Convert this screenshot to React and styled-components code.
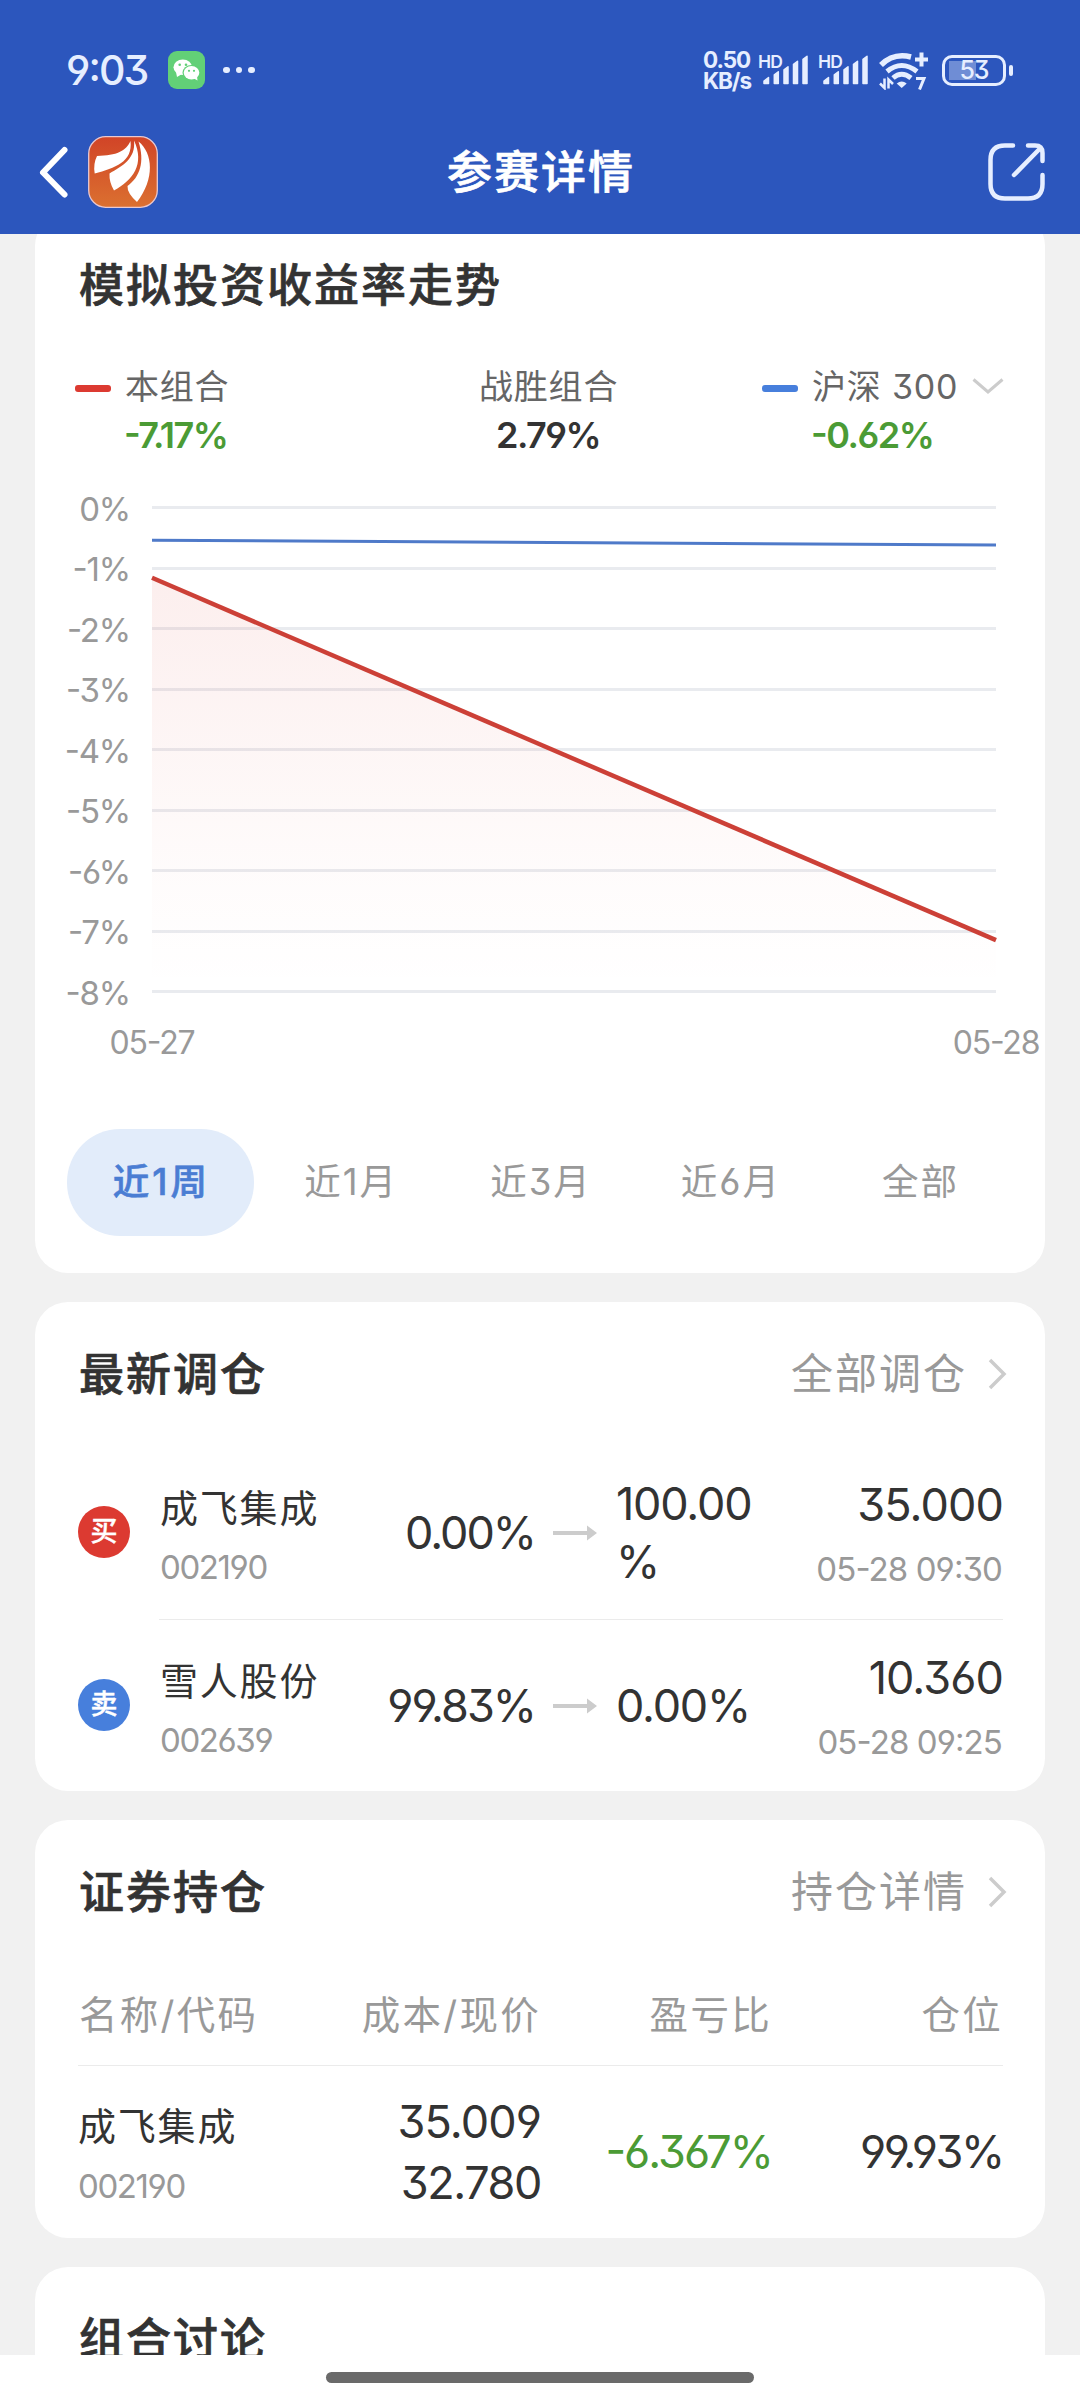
import React, { useState } from 'react';
import styled, { createGlobalStyle } from 'styled-components';

const GlobalStyle = createGlobalStyle`
  * {
    box-sizing: border-box;
  }

  body {
    margin: 0;
    background: #f1f1f1;
    font-family: Inter, 'Noto Sans CJK SC', sans-serif;
    font-feature-settings: 'case', 'cv03', 'cv04', 'cv09';
    color: #333;
  }
`;

const Page = styled.div`
  display: flex;
  flex-direction: column;
  width: 1080px;
  height: 2400px;
  overflow: hidden;
`;

const Header = styled.header`
  height: 234px;
  flex-shrink: 0;
  background: #2c56bd;
  color: #fff;
`;

const StatusBar = styled.div`
  display: flex;
  align-items: center;
  height: 134px;
  padding: 6px 67px 0 66px;
  color: #e6eeff;
`;

const Clock = styled.span`
  width: 102px;
  font-size: 41px;
  font-weight: 500;
  line-height: 44px;
  letter-spacing: -1.9px;
`;

const Dots = styled.div`
  display: flex;
  gap: 6px;
  margin-left: 18px;
  flex: 1;

  i {
    width: 6.5px;
    height: 6.5px;
    border-radius: 50%;
    background: #e6eeff;
  }
`;

const NetSpeed = styled.div`
  width: 56px;
  font-size: 22.5px;
  font-weight: 700;
  line-height: 21px;
  letter-spacing: -1.1px;
  white-space: nowrap;
`;

const Signal = styled.div`
  display: flex;
  width: 50px;
  height: 30px;
  margin-right: 10px;
`;

const SignalTag = styled.span`
  width: 0;
  margin: -2px 0 0 -1px;
  font-size: 17.5px;
  font-weight: 600;
  line-height: 17px;
  letter-spacing: -0.9px;
`;

const Battery = styled.div`
  position: relative;
  display: flex;
  align-items: center;
  justify-content: center;
  width: 64px;
  height: 31px;
  margin: 0 7px 0 13px;
  border: 3px solid #e6eeff;
  border-radius: 10px;
  background: linear-gradient(#6f8dd5, #6f8dd5) 4px 3px / 27px 19px no-repeat;
  font-size: 25px;
  font-weight: 500;
  line-height: 25px;
  letter-spacing: -1px;

  &::after {
    content: '';
    position: absolute;
    right: -10px;
    top: 7px;
    width: 4px;
    height: 11px;
    border-radius: 2px;
    background: #e6eeff;
  }
`;

const NavBar = styled.div`
  display: grid;
  grid-template-columns: 1fr auto 1fr;
  align-items: center;
  height: 75px;
  padding: 0 34px 0 38px;
`;

const NavLeft = styled.div`
  display: flex;
  align-items: center;
  gap: 18px;
`;

const NavTitle = styled.h1`
  margin: 0;
  padding: 3px 2px 0 0;
  font-size: 45px;
  font-weight: 500;
  line-height: 60px;
  letter-spacing: 2px;
  -webkit-text-stroke: 0.7px currentColor;
`;

const NavRight = styled.div`
  display: flex;
  justify-content: flex-end;
`;

const Content = styled.main`
  flex: 1;
  min-height: 0;
  overflow: hidden;
`;

// scrolled slightly, the first card slides under the header
const Feed = styled.div`
  display: flex;
  flex-direction: column;
  gap: 29px;
  margin-top: -21px;
  padding: 0 35px;
`;

const Card = styled.section`
  background: #fff;
  border-radius: 33px;
  height: ${(p) => p.$height}px;
  flex-shrink: 0;
`;

const CardHead = styled.div`
  display: flex;
  align-items: center;
  justify-content: space-between;
  height: 144px;
  padding: 0 38px 0 44px;
`;

const CardTitle = styled.h2`
  margin: 0;
  padding-top: 2px;
  font-size: 45px;
  font-weight: 500;
  line-height: 60px;
  letter-spacing: 2px;
  -webkit-text-stroke: 0.7px currentColor;
`;

const MoreLink = styled.a`
  display: flex;
  align-items: center;
  gap: 21px;
  color: #999;
  font-size: 42px;
  line-height: 60px;
  letter-spacing: 2px;
`;

const Legend = styled.div`
  display: flex;
  padding-left: 40px;
`;

const LegendItem = styled.div`
  display: flex;
  width: ${(p) => p.$width}px;
`;

const LegendMark = styled.i`
  width: 36px;
  height: 7px;
  margin: 28px 14px 0 0;
  border-radius: 3px;
  background: ${(p) => p.$color};
`;

const LegendText = styled.div`
  display: flex;
  flex-direction: column;
  align-items: ${(p) => (p.$center ? 'center' : 'flex-start')};
`;

const LegendLabel = styled.span`
  display: flex;
  align-items: center;
  gap: 14px;
  height: 58px;
  padding-top: 1px;
  color: #666;
  font-size: 34px;
  line-height: 58px;
  letter-spacing: 0.8px;
  white-space: nowrap;
`;

const LegendValue = styled.span`
  color: ${(p) => p.$color || '#333'};
  margin-left: -1px;
  font-size: 36px;
  font-weight: 600;
  line-height: 40px;
  letter-spacing: -1.5px;
`;

const ChartSvg = styled.svg`
  display: block;
  width: 1010px;
  height: 674px;

  text {
    fill: #999;
    letter-spacing: -1.2px;
  }
`;

const Tabs = styled.div`
  display: flex;
  gap: 3px;
  padding: 0 32px;
`;

const Tab = styled.button`
  width: 187px;
  height: 107px;
  padding: 0 0 0 2px;
  border: none;
  border-radius: 53px;
  background: ${(p) => (p.$active ? '#e2ecfa' : 'transparent')};
  color: ${(p) => (p.$active ? '#4a7dd3' : '#999')};
  font-family: inherit;
  font-feature-settings: inherit;
  font-size: 36.5px;
  font-weight: ${(p) => (p.$active ? 500 : 400)};
  line-height: 107px;
  letter-spacing: ${(p) => (p.$active ? 3 : 2)}px;
  -webkit-text-stroke: ${(p) => (p.$active ? 0.6 : 0)}px currentColor;
  cursor: pointer;
`;

const TradeRow = styled.div`
  display: grid;
  grid-template-columns: 82px 200px 174px 82px 150px 1fr;
  align-items: center;
  height: ${(p) => p.$height}px;
  padding: 0 43px;
`;

const Badge = styled.span`
  width: 52px;
  height: 52px;
  margin-top: -2px;
  border-radius: 50%;
  background: ${(p) => (p.$side === '买' ? '#dc3a31' : '#477fdc')};
  color: #fff;
  font-size: 27px;
  font-weight: 500;
  line-height: 52px;
  text-align: center;
  -webkit-text-stroke: 0.4px currentColor;
`;

const Stack = styled.div`
  display: flex;
  flex-direction: column;
  align-items: ${(p) => (p.$right ? 'flex-end' : 'flex-start')};
  padding-top: ${(p) => p.$offset || 0}px;
`;

const StockName = styled.span`
  font-size: 38px;
  line-height: 60px;
  letter-spacing: 1.8px;
`;

const SmallText = styled.span`
  color: #999;
  font-size: 33px;
  line-height: ${(p) => p.$line || 58}px;
  letter-spacing: ${(p) => p.$spacing || -1.4}px;
  white-space: nowrap;
`;

const Figure = styled.span`
  color: ${(p) => p.$color || '#333'};
  margin-right: -1px;
  font-size: 45px;
  line-height: ${(p) => p.$line || 58}px;
  letter-spacing: ${(p) => p.$spacing || -2}px;
  text-align: ${(p) => p.$align || 'right'};
  line-break: anywhere;
`;

const ArrowCell = styled.div`
  display: flex;
  justify-content: center;
`;

const Divider = styled.div`
  height: 1px;
  margin: 0 42px 0 ${(p) => p.$left || 43}px;
  background: #ebebeb;
`;

const HoldingRow = styled.div`
  display: grid;
  grid-template-columns: 230px 232px 231px 1fr;
  align-items: center;
  height: ${(p) => p.$height}px;
  padding: 0 43px;
`;

const ColumnName = styled.span`
  padding-left: 1px;
  margin-right: -1px;
  color: #999;
  font-size: 38.5px;
  line-height: 60px;
  letter-spacing: 2.3px;
  text-align: ${(p) => (p.$right ? 'right' : 'left')};
`;

const Footer = styled.footer`
  display: flex;
  justify-content: center;
  height: 45px;
  padding-top: 17px;
  flex-shrink: 0;
  background: #fff;
`;

const HomeIndicator = styled.div`
  width: 428px;
  height: 11px;
  border-radius: 6px;
  background: #6a6a6a;
`;

const GREEN = '#4b9b35';

const WeChatIcon = () => (
  <svg width="37" height="38" viewBox="0 0 37 38">
    <rect width="37" height="38" rx="9" fill="#62d077" />
    <path d="M8 21l1 5 5-3z" fill="#fff" />
    <ellipse cx="14.8" cy="16.2" rx="9.3" ry="7.8" fill="#fff" />
    <ellipse cx="23.5" cy="21.8" rx="9" ry="7.8" fill="#62d077" />
    <ellipse cx="23.5" cy="21.8" rx="7.8" ry="6.7" fill="#fff" />
    <path d="M25 27l4.5 2.5-.5-4z" fill="#fff" />
    <g fill="#62d077">
      <circle cx="11.7" cy="13.8" r="1.3" />
      <circle cx="18" cy="13.8" r="1.3" />
      <circle cx="21" cy="19.8" r="1.1" />
      <circle cx="26" cy="19.8" r="1.1" />
    </g>
  </svg>
);

const SignalBars = () => (
  <Signal>
    <SignalTag>HD</SignalTag>
    <svg width="50" height="30" viewBox="0 0 50 30" fill="#e6eeff" stroke="#e6eeff" strokeWidth="1.5" strokeLinejoin="round">
      <path d="M6 28.5v-2.5l4.500-3.500v6z" />
      <path d="M16.3 28.5v-8.700l4-3v11.700z" />
      <path d="M26 28.5v-13.700l4-3v16.700z" />
      <path d="M35.5 28.5v-19.200l4-3v22.200z" />
      <path d="M45 28.5v-24.200l4-3v27.200z" />
    </svg>
  </Signal>
);

const WifiIcon = () => (
  <svg width="50" height="40" viewBox="0 0 50 40" fill="none" stroke="#e6eeff">
    <path d="M2 15Q14.5 2.5 32 7" strokeWidth="5.5" />
    <path d="M8 21.5Q22.5 9.5 38 21.5" strokeWidth="5" />
    <path d="M14 28Q22.5 20.5 32 28" strokeWidth="5" />
    <path d="M22.7 38l-5-4.500q5-4 10 0z" fill="#e6eeff" stroke="none" />
    <path d="M42.5 2.5v14M36 9.5h13" strokeWidth="4" />
    <path d="M37 28.5h8l-4.500 11" strokeWidth="3" />
    <path d="M5.5 28.5v9.500l-4.500-4.500M9.500 38.5v-9l4.500 4.500" strokeWidth="2.5" />
  </svg>
);

const BackIcon = () => (
  <svg width="32" height="54" viewBox="0 0 32 54" fill="none" stroke="#fff" strokeWidth="6" strokeLinecap="round" strokeLinejoin="round">
    <path d="M26.5 5L5 27.5L26.5 49.5" />
  </svg>
);

const AppLogo = () => (
  <svg width="70" height="72" viewBox="0 0 70 72">
    <defs>
      <linearGradient id="logoBg" x1="0" y1="0" x2="0" y2="1">
        <stop offset="0" stopColor="#d14427" />
        <stop offset="1" stopColor="#db7030" />
      </linearGradient>
    </defs>
    <rect x="0.7" y="0.7" width="68.6" height="70.6" rx="17" fill="url(#logoBg)" stroke="#e9c8cf" strokeWidth="1.3" />
    <g fill="#fff">
      <path d="M42.5 5C38 15 29 19.5 9 20Q5 28 6.7 37.5C27 32 45 26 42.5 5Z" />
      <path d="M46 4.5C48 23 34 30 21.5 37.5Q21 46 26 54.5C45 44 57 28 46 4.5Z" />
      <path d="M50.5 5.5C65 17 67 43 49 66Q39 57 39.5 50C52 41 57 26 50.5 5.5Z" />
    </g>
  </svg>
);

const ShareIcon = () => (
  <svg width="58" height="60" viewBox="0 0 58 60" fill="none" stroke="#e6eeff" strokeWidth="4.5" strokeLinecap="round">
    <path d="M25 3.5H17Q2.5 3.5 2.5 18V42Q2.5 56.5 17 56.5H40Q54.5 56.5 54.5 42V33" />
    <path d="M40 3.5H47Q54.5 3.5 54.5 11V19" />
    <path d="M52 6.5L26 33" />
  </svg>
);

const ChevronRight = () => (
  <svg width="19" height="32" viewBox="0 0 19 32" fill="none" stroke="#ccc" strokeWidth="3.5">
    <path d="M2 2L16 16L2 30" />
  </svg>
);

const ChevronDown = () => (
  <svg width="32" height="18" viewBox="0 0 32 18" fill="none" stroke="#ccc" strokeWidth="3">
    <path d="M1.5 1.5L16 14L30.5 1.5" />
  </svg>
);

const ArrowIcon = () => (
  <svg width="44" height="16" viewBox="0 0 44 16" fill="#ccc">
    <rect y="6" width="36" height="4" />
    <path d="M34 0.5L44 8L34 15.5Z" />
  </svg>
);

const PLOT = { left: 117, right: 961, top: 52, step: 60.5 };
const levels = [0, 1, 2, 3, 4, 5, 6, 7, 8];
const yAt = (value) => PLOT.top - value * PLOT.step;

const series = {
  portfolio: [-1.17, -7.16],
  index: [-0.55, -0.63],
};

const TrendChart = () => {
  const { left, right } = PLOT;
  const [p0, p1] = series.portfolio.map(yAt);
  const [i0, i1] = series.index.map(yAt);
  const bottom = yAt(-8);

  return (
    <ChartSvg viewBox="0 0 1010 674">
      <defs>
        <linearGradient id="area" gradientUnits="userSpaceOnUse" x1="0" y1={p0} x2="0" y2={bottom}>
          <stop offset="0" stopColor="#dc3a31" stopOpacity="0.085" />
          <stop offset="0.75" stopColor="#dc3a31" stopOpacity="0.015" />
          <stop offset="1" stopColor="#dc3a31" stopOpacity="0" />
        </linearGradient>
      </defs>
      {levels.map((n) => (
        <g key={n}>
          <rect x={left} y={Math.round(yAt(-n)) - 1} width={right - left} height="3" fill="#e9ebef" />
          <text x="95" y={yAt(-n) + 13.5} fontSize="33" textAnchor="end">
            {n === 0 ? '0%' : `-${n}%`}
          </text>
        </g>
      ))}
      <path d={`M${left} ${p0}L${right} ${p1}V${bottom}H${left}Z`} fill="url(#area)" />
      <path d={`M${left} ${i0}L${right} ${i1}`} stroke="#4f7ac9" strokeWidth="3" />
      <path d={`M${left} ${p0}L${right} ${p1}`} stroke="#cc4037" strokeWidth="4.5" />
      <text x={left} y="599" fontSize="32" textAnchor="middle">05-27</text>
      <text x={right} y="599" fontSize="32" textAnchor="middle">05-28</text>
    </ChartSvg>
  );
};

const ranges = ['近1周', '近1月', '近3月', '近6月', '全部'];

const trades = [
  { side: '买', name: '成飞集成', code: '002190', from: '0.00%', to: '100.00%', price: '35.000', time: '05-28 09:30', height: 173 },
  { side: '卖', name: '雪人股份', code: '002639', from: '99.83%', to: '0.00%', price: '10.360', time: '05-28 09:25', height: 171 },
];

const App = () => {
  const [range, setRange] = useState('近1周');

  return (
    <Page>
      <GlobalStyle />
      <Header>
        <StatusBar>
          <Clock>9:03</Clock>
          <WeChatIcon />
          <Dots><i /><i /><i /></Dots>
          <NetSpeed>0.50<br />KB/s</NetSpeed>
          <SignalBars />
          <SignalBars />
          <WifiIcon />
          <Battery>53</Battery>
        </StatusBar>
        <NavBar>
          <NavLeft>
            <BackIcon />
            <AppLogo />
          </NavLeft>
          <NavTitle>参赛详情</NavTitle>
          <NavRight>
            <ShareIcon />
          </NavRight>
        </NavBar>
      </Header>

      <Content>
        <Feed>
          <Card $height={1060}>
            <CardHead>
              <CardTitle>模拟投资收益率走势</CardTitle>
            </CardHead>
            <Legend>
              <LegendItem $width={404}>
                <LegendMark $color="#dc3a31" />
                <LegendText>
                  <LegendLabel>本组合</LegendLabel>
                  <LegendValue $color={GREEN}>-7.17%</LegendValue>
                </LegendText>
              </LegendItem>
              <LegendItem $width={283}>
                <LegendText $center>
                  <LegendLabel>战胜组合</LegendLabel>
                  <LegendValue>2.79%</LegendValue>
                </LegendText>
              </LegendItem>
              <LegendItem $width={260}>
                <LegendMark $color="#477fdc" />
                <LegendText>
                  <LegendLabel>沪深 300 <ChevronDown /></LegendLabel>
                  <LegendValue $color={GREEN}>-0.62%</LegendValue>
                </LegendText>
              </LegendItem>
            </Legend>
            <TrendChart />
            <Tabs>
              {ranges.map((item) => (
                <Tab key={item} $active={item === range} onClick={() => setRange(item)}>
                  {item}
                </Tab>
              ))}
            </Tabs>
          </Card>

          <Card $height={489}>
            <CardHead>
              <CardTitle>最新调仓</CardTitle>
              <MoreLink>全部调仓 <ChevronRight /></MoreLink>
            </CardHead>
            {trades.map((trade, index) => (
              <React.Fragment key={trade.code}>
                {index > 0 && <Divider $left={124} />}
                <TradeRow $height={trade.height}>
                  <Badge $side={trade.side}>{trade.side}</Badge>
                  <Stack $offset={8}>
                    <StockName>{trade.name}</StockName>
                    <SmallText>{trade.code}</SmallText>
                  </Stack>
                  <Figure>{trade.from}</Figure>
                  <ArrowCell><ArrowIcon /></ArrowCell>
                  <Figure $align="left" $spacing={-1.2}>{trade.to}</Figure>
                  <Stack $right $offset={7}>
                    <Figure $line={66} $spacing={-0.9}>{trade.price}</Figure>
                    <SmallText $line={62} $spacing={-0.9}>{trade.time}</SmallText>
                  </Stack>
                </TradeRow>
              </React.Fragment>
            ))}
          </Card>

          <Card $height={418}>
            <CardHead>
              <CardTitle>证券持仓</CardTitle>
              <MoreLink>持仓详情 <ChevronRight /></MoreLink>
            </CardHead>
            <HoldingRow $height={101}>
              <ColumnName>名称/代码</ColumnName>
              <ColumnName $right>成本/现价</ColumnName>
              <ColumnName $right>盈亏比</ColumnName>
              <ColumnName $right>仓位</ColumnName>
            </HoldingRow>
            <Divider />
            <HoldingRow $height={172}>
              <Stack $offset={7}>
                <StockName>成飞集成</StockName>
                <SmallText $line={60}>002190</SmallText>
              </Stack>
              <Stack $right>
                <Figure $line={61} $spacing={-0.9}>35.009</Figure>
                <Figure $line={61} $spacing={-1.4}>32.780</Figure>
              </Stack>
              <Figure $color={GREEN}>-6.367%</Figure>
              <Figure $spacing={-2.3}>99.93%</Figure>
            </HoldingRow>
          </Card>

          <Card $height={300}>
            <CardHead>
              <CardTitle>组合讨论</CardTitle>
            </CardHead>
          </Card>
        </Feed>
      </Content>

      <Footer>
        <HomeIndicator />
      </Footer>
    </Page>
  );
};

export default App;
